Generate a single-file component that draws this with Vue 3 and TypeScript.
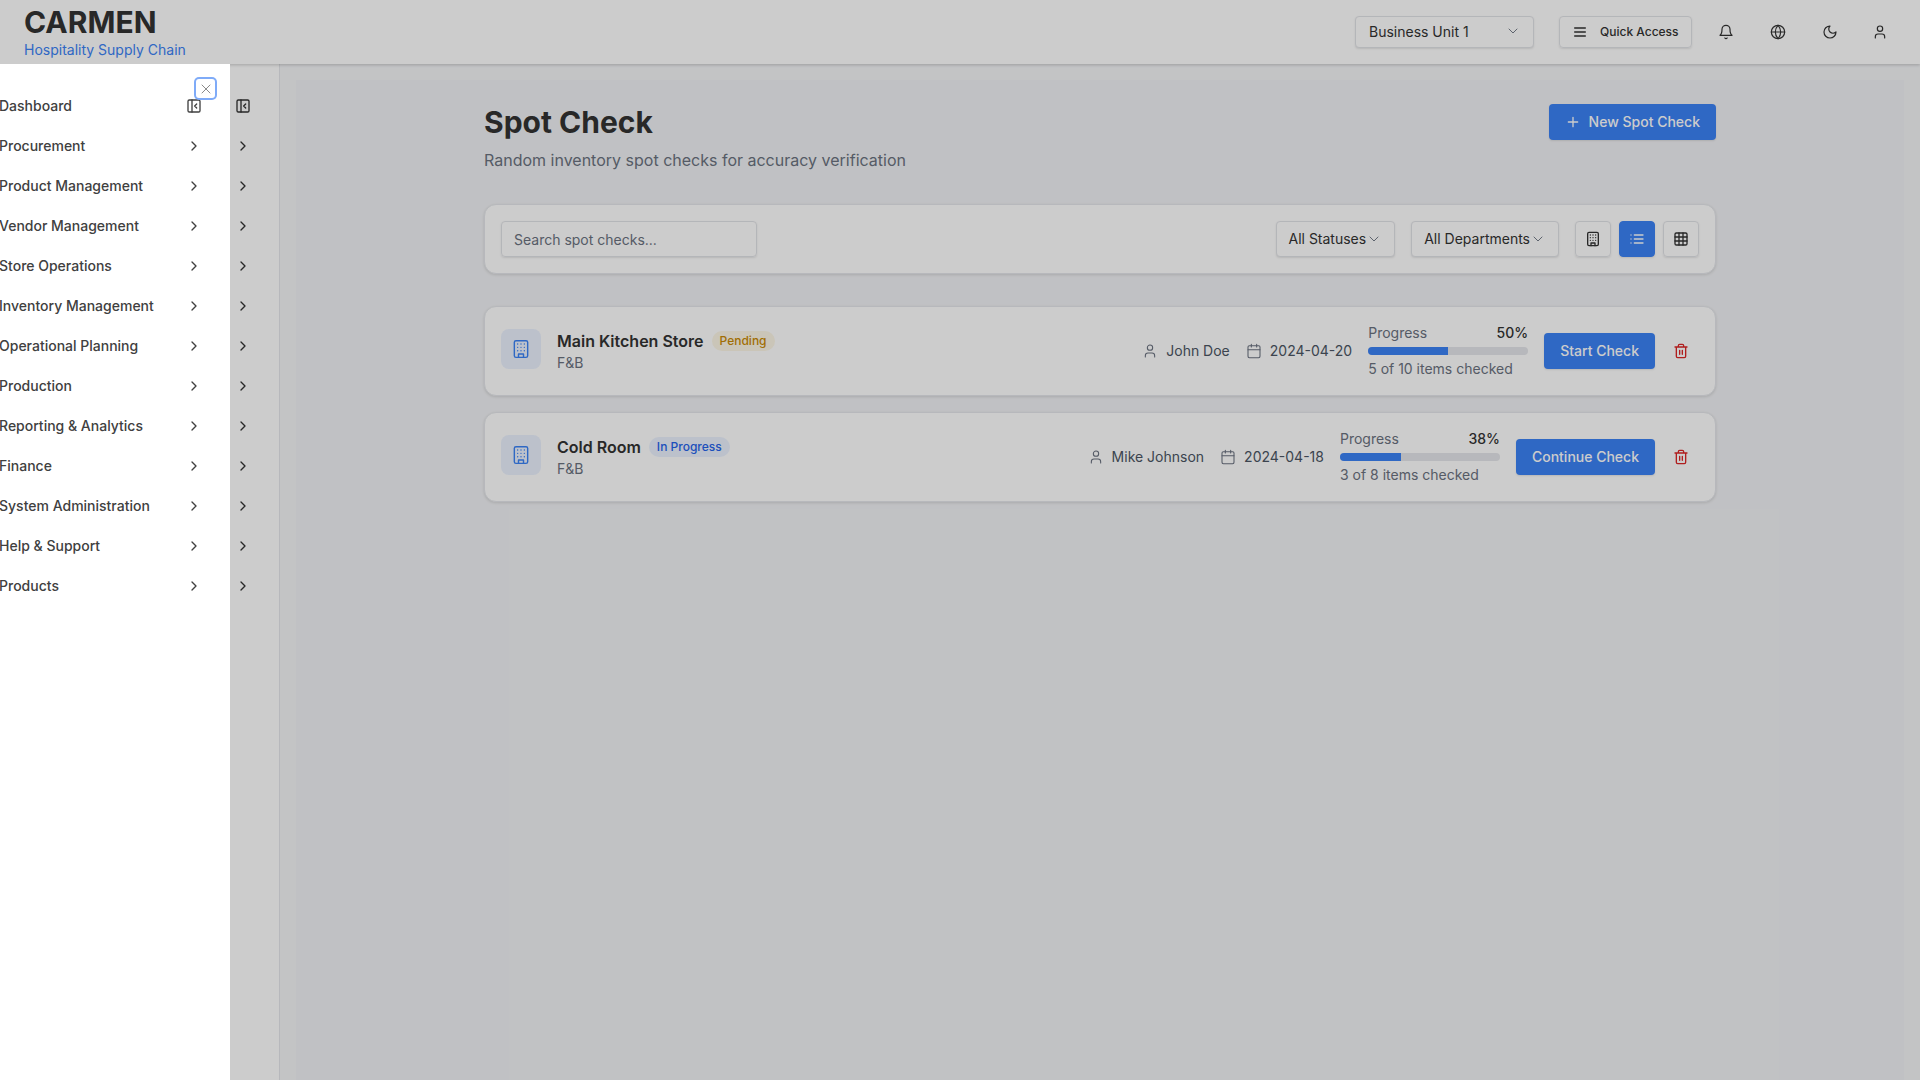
<script setup lang="ts">
const navItems = [
  'Dashboard',
  'Procurement',
  'Product Management',
  'Vendor Management',
  'Store Operations',
  'Inventory Management',
  'Operational Planning',
  'Production',
  'Reporting & Analytics',
  'Finance',
  'System Administration',
  'Help & Support',
  'Products'
]

const checks = [
  {
    name: 'Main Kitchen Store',
    status: 'Pending',
    statusClass: 'pending',
    dept: 'F&B',
    user: 'John Doe',
    date: '2024-04-20',
    pct: 50,
    summary: '5 of 10 items checked',
    action: 'Start Check'
  },
  {
    name: 'Cold Room',
    status: 'In Progress',
    statusClass: 'progress',
    dept: 'F&B',
    user: 'Mike Johnson',
    date: '2024-04-18',
    pct: 38,
    summary: '3 of 8 items checked',
    action: 'Continue Check'
  }
]
</script>

<template>
  <div class="page">
    <header class="topbar">
      <div class="brand">
        <div class="brand-name">CARMEN</div>
        <div class="brand-sub">Hospitality Supply Chain</div>
      </div>
      <div class="top-actions">
        <button class="select unit">
          <span>Business Unit 1</span>
          <svg class="chev-down" viewBox="0 0 24 24"><path d="m6 9 6 6 6-6" /></svg>
        </button>
        <button class="quick">
          <svg class="ico" viewBox="0 0 24 24"><path d="M4 6h16M4 12h16M4 18h16" /></svg>
          <span>Quick Access</span>
        </button>
        <button class="ghost">
          <svg class="ico" viewBox="0 0 24 24"><path d="M6 8a6 6 0 0 1 12 0c0 7 3 9 3 9H3s3-2 3-9" /><path d="M10.3 21a1.94 1.94 0 0 0 3.4 0" /></svg>
        </button>
        <button class="ghost">
          <svg class="ico" viewBox="0 0 24 24"><circle cx="12" cy="12" r="10" /><path d="M12 2a14.5 14.5 0 0 0 0 20 14.5 14.5 0 0 0 0-20" /><path d="M2 12h20" /></svg>
        </button>
        <button class="ghost">
          <svg class="ico" viewBox="0 0 24 24"><path d="M12 3a6 6 0 0 0 9 9 9 9 0 1 1-9-9Z" /></svg>
        </button>
        <button class="ghost">
          <svg class="ico" viewBox="0 0 24 24"><path d="M19 21v-2a4 4 0 0 0-4-4H9a4 4 0 0 0-4 4v2" /><circle cx="12" cy="7" r="4" /></svg>
        </button>
      </div>
    </header>

    <div class="body">
      <!-- the open drawer covers the labels of this sidebar, only its icons show -->
      <aside class="sidebar">
        <nav class="nav">
          <div v-for="(item, i) in navItems" :key="item" class="nav-item end">
            <svg v-if="i === 0" class="ico" viewBox="0 0 24 24"><rect x="3" y="3" width="18" height="18" rx="2" /><path d="M9 3v18" /><path d="m16 15-3-3 3-3" /></svg>
            <svg v-else class="ico" viewBox="0 0 24 24"><path d="m9 18 6-6-6-6" /></svg>
          </div>
        </nav>
      </aside>

      <main class="main">
        <div class="panel">
          <div class="content">
            <div class="title-row">
              <div>
                <h1>Spot Check</h1>
                <p class="subtitle">Random inventory spot checks for accuracy verification</p>
              </div>
              <button class="btn new">
                <svg class="ico" viewBox="0 0 24 24"><path d="M5 12h14M12 5v14" /></svg>
                New Spot Check
              </button>
            </div>

            <section class="card filters">
              <div class="search">Search spot checks...</div>
              <div class="filter-right">
                <button class="select filter">
                  <span>All Statuses</span>
                  <svg class="chev-down" viewBox="0 0 24 24"><path d="m6 9 6 6 6-6" /></svg>
                </button>
                <button class="select filter">
                  <span>All Departments</span>
                  <svg class="chev-down" viewBox="0 0 24 24"><path d="m6 9 6 6 6-6" /></svg>
                </button>
                <div class="views">
                  <button class="view">
                    <svg class="ico" viewBox="0 0 24 24"><rect x="4" y="2" width="16" height="20" rx="2" /><path d="M9 22v-4h6v4M8 6h.01M16 6h.01M12 6h.01M12 10h.01M12 14h.01M16 10h.01M16 14h.01M8 10h.01M8 14h.01" /></svg>
                  </button>
                  <button class="view active">
                    <svg class="ico" viewBox="0 0 24 24"><path d="M3 12h.01M3 18h.01M3 6h.01M8 12h13M8 18h13M8 6h13" /></svg>
                  </button>
                  <button class="view">
                    <svg class="ico" viewBox="0 0 24 24"><rect x="3" y="3" width="18" height="18" rx="2" /><path d="M3 9h18M3 15h18M9 3v18M15 3v18" /></svg>
                  </button>
                </div>
              </div>
            </section>

            <section class="list">
              <article v-for="check in checks" :key="check.name" class="card row">
                <div class="row-icon">
                  <svg class="ico big" viewBox="0 0 24 24"><rect x="4" y="2" width="16" height="20" rx="2" /><path d="M9 22v-4h6v4M8 6h.01M16 6h.01M12 6h.01M12 10h.01M12 14h.01M16 10h.01M16 14h.01M8 10h.01M8 14h.01" /></svg>
                </div>
                <div class="row-main">
                  <div class="row-title">
                    <span class="row-name">{{ check.name }}</span>
                    <span class="badge" :class="check.statusClass">{{ check.status }}</span>
                  </div>
                  <div class="row-dept">{{ check.dept }}</div>
                </div>
                <div class="meta">
                  <svg class="ico muted" viewBox="0 0 24 24"><path d="M19 21v-2a4 4 0 0 0-4-4H9a4 4 0 0 0-4 4v2" /><circle cx="12" cy="7" r="4" /></svg>
                  <span>{{ check.user }}</span>
                </div>
                <div class="meta">
                  <svg class="ico muted" viewBox="0 0 24 24"><path d="M8 2v4M16 2v4" /><rect x="3" y="4" width="18" height="18" rx="2" /><path d="M3 10h18" /></svg>
                  <span>{{ check.date }}</span>
                </div>
                <div class="progress-col">
                  <div class="progress-head">
                    <span>Progress</span>
                    <b>{{ check.pct }}%</b>
                  </div>
                  <div class="bar"><div class="bar-fill" :style="{ width: check.pct + '%' }"></div></div>
                  <div class="progress-sum">{{ check.summary }}</div>
                </div>
                <button class="btn act">{{ check.action }}</button>
                <button class="trash">
                  <svg class="ico" viewBox="0 0 24 24"><path d="M3 6h18M19 6v14c0 1-1 2-2 2H7c-1 0-2-1-2-2V6M8 6V4c0-1 1-2 2-2h4c1 0 2 1 2 2v2M10 11v6M14 11v6" /></svg>
                </button>
              </article>
            </section>
          </div>
        </div>
      </main>
    </div>

    <div class="overlay"></div>

    <aside class="drawer">
      <nav class="nav shifted">
        <div v-for="(item, i) in navItems" :key="item" class="nav-item">
          <span class="nav-label">{{ item }}</span>
          <svg v-if="i === 0" class="ico" viewBox="0 0 24 24"><rect x="3" y="3" width="18" height="18" rx="2" /><path d="M9 3v18" /><path d="m16 15-3-3 3-3" /></svg>
          <svg v-else class="ico" viewBox="0 0 24 24"><path d="m9 18 6-6-6-6" /></svg>
        </div>
      </nav>
      <button class="close">
        <svg class="ico" viewBox="0 0 24 24"><path d="M18 6 6 18M6 6l12 12" /></svg>
      </button>
    </aside>
  </div>
</template>

<style scoped>
.page {
  position: relative;
  height: 1080px;
  overflow: hidden;
  background: #f4f5f7;
  color: #333;
  font-family: Inter, "Noto Sans", sans-serif;
  font-size: 14px;
  display: flex;
  flex-direction: column;
}

button {
  font-family: inherit;
  color: inherit;
  background: none;
  border: 0;
  padding: 0;
}

.ico {
  width: 16px;
  height: 16px;
  fill: none;
  stroke: currentColor;
  stroke-width: 2;
  stroke-linecap: round;
  stroke-linejoin: round;
  flex: none;
}

.ico.big {
  width: 20px;
  height: 20px;
}

.ico.muted {
  color: #6b7280;
  stroke-width: 1.6;
}

.chev-down {
  width: 16px;
  height: 16px;
  fill: none;
  stroke: #6b7280;
  stroke-width: 1.4;
  stroke-linecap: round;
  stroke-linejoin: round;
  flex: none;
}

.topbar {
  height: 64px;
  flex: none;
  display: flex;
  align-items: center;
  justify-content: space-between;
  padding: 0 22px 0 24px;
  background: #fff;
  box-shadow: 0 1px 3px rgba(0, 0, 0, 0.2);
  position: relative;
  z-index: 2;
}

.brand {
  line-height: 1;
  margin-top: -1px;
}

.brand-name {
  font-size: 30px;
  font-weight: 700;
  line-height: 36px;
}

.brand-sub {
  font-size: 14px;
  line-height: 20px;
  color: #3b82f6;
}

.top-actions {
  display: flex;
  align-items: center;
}

.select {
  display: flex;
  align-items: center;
  justify-content: space-between;
  border: 1px solid #e2e4e8;
  border-radius: 4px;
  box-shadow: 0 1px 2px rgba(0, 0, 0, 0.1);
  background: #fff;
  font-size: 14px;
}

.unit {
  width: 179px;
  height: 32px;
  padding: 0 12px 2px 13px;
  margin-right: 25px;
}

.quick {
  display: flex;
  align-items: center;
  gap: 12px;
  width: 133px;
  height: 32px;
  padding: 0 12px 1px;
  border: 1px solid #e2e4e8;
  border-radius: 4px;
  box-shadow: 0 1px 2px rgba(0, 0, 0, 0.1);
  font-size: 12px;
  font-weight: 500;
  margin-right: 16px;
}

.ghost {
  width: 36px;
  height: 36px;
  display: flex;
  align-items: center;
  justify-content: center;
  margin-right: 16px;
}

.ghost .ico {
  stroke-width: 1.8;
}

.ghost:last-child {
  margin-left: -2px;
  margin-right: 0;
}

.body {
  flex: 1;
  display: flex;
  min-height: 0;
}

.sidebar {
  width: 280px;
  flex: none;
  background: #fff;
  border-right: 1px solid #e5e7eb;
  box-sizing: border-box;
}

.nav {
  width: 280px;
  box-sizing: border-box;
  padding: 22px 29px 0 49px;
}

.nav.shifted {
  margin-left: -49px;
  padding-left: 48px;
}

.nav-item {
  height: 40px;
  display: flex;
  align-items: center;
  justify-content: space-between;
  font-weight: 500;
  color: #404040;
  white-space: nowrap;
}

.nav-item.end {
  justify-content: flex-end;
  color: #333;
}

.nav-label {
  padding-bottom: 2px;
}

.main {
  flex: 1;
  padding: 16px 16px 0;
  min-width: 0;
}

.panel {
  height: 100%;
  background: #f1f2f5;
  padding: 24px;
  box-sizing: border-box;
}

.content {
  width: 1232px;
  margin: 0 auto;
}

.title-row {
  display: flex;
  justify-content: space-between;
  align-items: flex-start;
  margin-bottom: 32px;
}

h1 {
  margin: 0;
  font-size: 30px;
  line-height: 36px;
  font-weight: 700;
}

.subtitle {
  margin: 8px 0 0;
  font-size: 16px;
  line-height: 24px;
  color: #6b7280;
}

.btn {
  display: flex;
  align-items: center;
  justify-content: center;
  height: 36px;
  padding: 0 16px 1px;
  background: #3b82f6;
  color: #fff;
  border-radius: 4px;
  font-size: 14px;
  font-weight: 500;
  box-shadow: 0 1px 2px rgba(0, 0, 0, 0.1);
  white-space: nowrap;
}

.btn.new {
  gap: 8px;
}

.card {
  background: #fff;
  border: 1px solid #e5e7eb;
  border-radius: 12px;
  box-shadow: 0 1px 3px rgba(0, 0, 0, 0.12);
  padding: 16px;
  display: flex;
  align-items: center;
}

.filters {
  justify-content: space-between;
  height: 70px;
  box-sizing: border-box;
}

.search {
  width: 256px;
  height: 36px;
  box-sizing: border-box;
  border: 1px solid #e2e4e8;
  border-radius: 4px;
  box-shadow: 0 1px 2px rgba(0, 0, 0, 0.1);
  padding: 0 12px;
  display: flex;
  align-items: center;
  color: #6b7280;
}

.filter-right {
  display: flex;
  align-items: center;
  gap: 16px;
}

.filter {
  height: 36px;
  padding: 0 12px 1px;
  gap: 0;
}

.views {
  display: flex;
  gap: 8px;
}

.view {
  width: 36px;
  height: 36px;
  display: flex;
  align-items: center;
  justify-content: center;
  border: 1px solid #e2e4e8;
  border-radius: 4px;
  box-shadow: 0 1px 2px rgba(0, 0, 0, 0.1);
  box-sizing: border-box;
}

.view.active {
  background: #3b82f6;
  border-color: #3b82f6;
  color: #fff;
}

.list {
  margin-top: 32px;
  display: flex;
  flex-direction: column;
  gap: 16px;
}

.row {
  height: 90px;
  box-sizing: border-box;
}

.row-icon {
  width: 40px;
  height: 40px;
  border-radius: 8px;
  background: rgba(59, 130, 246, 0.1);
  color: #3b82f6;
  display: flex;
  align-items: center;
  justify-content: center;
  flex: none;
  margin-right: 16px;
  margin-top: -4px;
}

.row-icon .ico {
  stroke-width: 1.7;
}

.row-main {
  flex: 1;
  min-width: 0;
  margin-top: -1px;
}

.row-title {
  display: flex;
  align-items: center;
  gap: 8px;
}

.row-name {
  font-size: 16px;
  line-height: 24px;
  font-weight: 600;
}

.row-dept {
  line-height: 20px;
  color: #6b7280;
}

.badge {
  font-size: 12px;
  line-height: 16px;
  font-weight: 500;
  padding: 2px 8px;
  border-radius: 999px;
}

.badge.pending {
  background: rgba(234, 179, 8, 0.1);
  color: #ca8a04;
}

.badge.progress {
  background: rgba(59, 130, 246, 0.1);
  color: #2563eb;
}

.meta {
  display: flex;
  align-items: center;
  gap: 8px;
  color: #4b5563;
  margin-right: 16px;
  white-space: nowrap;
}

.meta span {
  padding-bottom: 1px;
}

.progress-col {
  width: 160px;
  flex: none;
  margin-right: 16px;
}

.progress-head {
  display: flex;
  justify-content: space-between;
  line-height: 20px;
  color: #6b7280;
}

.progress-head b {
  font-weight: 500;
  color: #333;
}

.bar {
  height: 8px;
  margin: 4px 0;
  border-radius: 999px;
  background: #e5e7eb;
  overflow: hidden;
}

.bar-fill {
  height: 100%;
  background: #3b82f6;
}

.progress-sum {
  line-height: 20px;
  color: #6b7280;
}

.trash {
  width: 36px;
  height: 36px;
  margin-left: 8px;
  display: flex;
  align-items: center;
  justify-content: center;
  color: #dc2626;
  flex: none;
}

.overlay {
  position: absolute;
  inset: 0;
  background: rgba(0, 0, 0, 0.2);
  z-index: 5;
}

.drawer {
  position: absolute;
  left: 0;
  top: 64px;
  bottom: 0;
  width: 230px;
  background: #fff;
  overflow: hidden;
  z-index: 6;
}

.close {
  position: absolute;
  top: 15px;
  left: 196px;
  width: 19px;
  height: 19px;
  display: flex;
  align-items: center;
  justify-content: center;
  border-radius: 3px;
  box-shadow: 0 0 0 2px #7fabf8;
  color: #8a8a8a;
}

.close .ico {
  stroke-width: 1.5;
}
</style>

<style>
html,
body {
  margin: 0;
  background: #f4f5f7;
}
</style>
